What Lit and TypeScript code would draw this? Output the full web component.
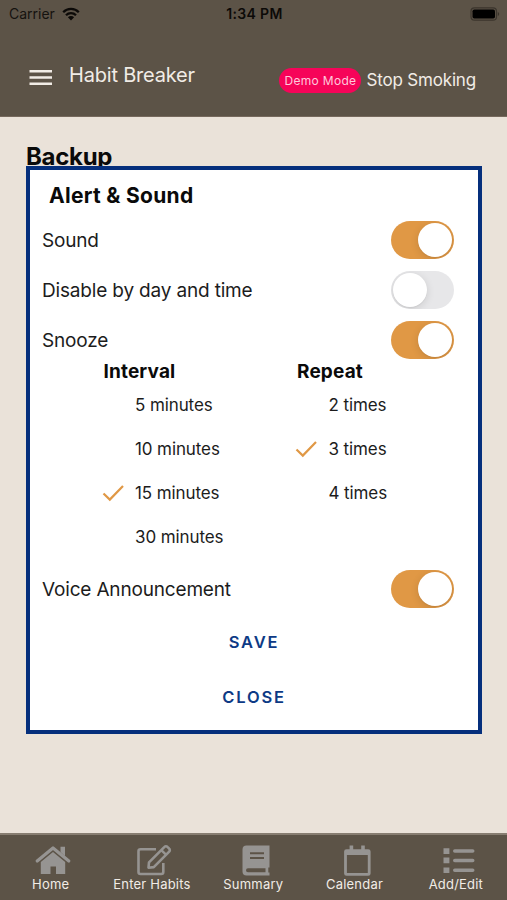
import { LitElement, html, css, svg } from "lit";
import { customElement, property } from "lit/decorators.js";
import { classMap } from "lit/directives/class-map.js";

@customElement("toggle-switch")
class ToggleSwitch extends LitElement {
  @property({ type: Boolean }) on = false;

  static styles = css`
    :host {
      display: block;
    }
    .track {
      box-sizing: border-box;
      width: 63px;
      height: 38px;
      padding: 2px;
      border-radius: 19px;
      background: #e7e7e9;
      display: flex;
      overflow: hidden;
    }
    .track.on {
      background: #e09845;
      justify-content: flex-end;
    }
    .knob {
      width: 34px;
      height: 34px;
      border-radius: 50%;
      background: #fff;
      box-shadow: 0 2px 8px rgba(0, 0, 0, 0.12), 0 1px 1px rgba(0, 0, 0, 0.05);
    }
  `;

  render() {
    return html`<div class=${classMap({ track: true, on: this.on })}><div class="knob"></div></div>`;
  }
}

@customElement("option-list")
class OptionList extends LitElement {
  @property() heading = "";
  @property({ attribute: false }) options: string[] = [];
  @property() selected = "";

  static styles = css`
    :host {
      display: block;
    }
    .heading {
      font-size: 19px;
      font-weight: 700;
      line-height: 22px;
      letter-spacing: 0.15px;
    }
    .option {
      display: grid;
      grid-template-columns: 31.500px auto;
      align-items: center;
      height: 44px;
      font-size: 17px;
      letter-spacing: -0.1px;
      color: #1c1c1c;
      white-space: nowrap;
    }
    .mark {
      display: block;
      width: 22px;
      height: 18px;
      margin-left: -2px;
      fill: none;
      stroke: #e09845;
      stroke-width: 2.200;
    }
  `;

  render() {
    return html`
      <div class="heading">${this.heading}</div>
      ${this.options.map(
        (o) => html`<div class="option">
          <span>${o === this.selected
            ? html`<svg class="mark" viewBox="0 0 22 18"><path d="M1.5 9.5 7.8 15.6 21 2" /></svg>`
            : ""}</span>
          <span>${o}</span>
        </div>`
      )}
    `;
  }
}

const tabIcons = {
  home: svg`<path d="M5.200 18 21 4.900 36.800 18" fill="none" stroke="currentColor" stroke-width="3.200" stroke-linecap="round" stroke-linejoin="round"/>
    <path d="M28.500 3.700h4.500v9.500L28.500 9z"/>
    <path d="M8.800 19 21 9 33.200 19V31H24V23.500H18.500V31H8.800z"/>`,
  edit: svg`<path d="M23 6.300H7.500a2 2 0 0 0-2 2V29a2 2 0 0 0 2 2H28.300a2 2 0 0 0 2-2V20" fill="none" stroke="currentColor" stroke-width="2.600"/>
    <path d="M16 19.300 31.500 3.900a2 2 0 0 1 2.900 0L36.200 5.700a2 2 0 0 1 0 2.900L20.800 24.100 15.500 24.700z" fill="none" stroke="currentColor" stroke-width="2.600" stroke-linejoin="round"/>
    <path d="M28 6.800 33.500 12.200" stroke="currentColor" stroke-width="2.400"/>`,
  book: svg`<path fill-rule="evenodd" d="M12.500 2.500H35.500V24.500H34.300V29.600H35.500V32.500H12.500A4 4 0 0 1 8.500 28.500V6.500A4 4 0 0 1 12.500 2.500zM16 9.300V11.300H30V9.300zM16 14V16H30V14zM14 25.300a2 2 0 0 0 0 4H31.500V25.300z"/>`,
  calendar: svg`<path d="M10.500 6.200H32.200a2.400 2.400 0 0 1 2.400 2.400V30.400A2.400 2.400 0 0 1 32.200 32.800H10.500a2.400 2.400 0 0 1-2.400-2.400V8.600A2.400 2.400 0 0 1 10.500 6.200zM10.900 12V30H31.800V12z" fill-rule="evenodd"/>
    <path d="M13.600 2.400h3.600v5h-3.600zM25.200 2.400h3.600v5h-3.600z"/>`,
  list: svg`<path d="M6.500 5.200h5.900v5.700H6.500zM6.500 14.600h5.900v5.700H6.500zM6.500 24.400h5.900v5.700H6.500z"/>
    <path d="M17.800 8H35.700M17.800 17.500H35.700M17.800 27.200H35.700" stroke="currentColor" stroke-width="3.600" stroke-linecap="round"/>`,
};

@customElement("app-root")
class AppRoot extends LitElement {
  static styles = css`
    :host {
      display: flex;
      flex-direction: column;
      position: relative;
      width: 507px;
      height: 900px;
      overflow: hidden;
      background: #eae2d9;
      color: #0a0a0a;
      font-family: Inter, "Liberation Sans", sans-serif;
    }
    .top {
      height: 117px;
      box-sizing: border-box;
      background: #5c5347;
      border-bottom: 1px solid #76695d;
      flex: none;
    }
    .status {
      height: 27px;
      display: grid;
      grid-template-columns: 1fr auto 1fr;
      align-items: center;
      padding: 0 7px 0 9px;
      font-size: 14px;
      color: #0c0a08;
    }
    .carrier {
      display: flex;
      align-items: center;
      gap: 7px;
      color: #15120f;
    }
    .wifi {
      width: 18px;
      height: 14px;
    }
    .time {
      font-weight: 600;
      letter-spacing: 0.35px;
    }
    .battery {
      width: 30px;
      height: 14px;
      justify-self: end;
    }
    .bar {
      display: flex;
      align-items: center;
      padding: 0 31px 0 29px;
      height: 96px;
      margin-top: 2px;
      color: #f1ece6;
    }
    .menu {
      width: 23px;
      height: 17px;
    }
    .name {
      margin: 0 auto 4px 17px;
      font-size: 20px;
      letter-spacing: -0.2px;
    }
    .badge {
      width: 82px;
      height: 25px;
      margin: 6px 5px 0 0;
      border-radius: 13px;
      background: #f60459;
      color: #ffc9dc;
      font-size: 12px;
      letter-spacing: 0.3px;
      line-height: 25px;
      text-align: center;
    }
    .habit {
      margin-top: 6px;
      font-size: 17px;
      letter-spacing: -0.17px;
    }
    .page {
      flex: 1;
      padding: 26px 26px 0;
    }
    .section {
      margin: 0;
      font-size: 24px;
      font-weight: 700;
      line-height: 28px;
      letter-spacing: -0.3px;
    }
    .dialog {
      position: absolute;
      left: 26px;
      top: 166px;
      width: 456px;
      height: 568px;
      box-sizing: border-box;
      border: 4px solid #052f7c;
      background: #fff;
      padding: 11px 24px 0 12px;
    }
    .title {
      margin: 0 0 4px 7px;
      font-size: 21px;
      line-height: 30px;
      font-weight: 700;
      letter-spacing: 0.3px;
    }
    .row {
      display: flex;
      align-items: center;
      justify-content: space-between;
      height: 50px;
      font-size: 19px;
      letter-spacing: -0.17px;
      color: #1c1c1c;
    }
    .lists {
      display: grid;
      grid-template-columns: 193.500px auto;
      justify-content: start;
      margin: -4px 0 5px 61.500px;
    }
    .actions {
      display: flex;
      flex-direction: column;
      align-items: center;
      margin: 0 -12px 0 0;
    }
    .action {
      height: 55px;
      padding: 0;
      border: 0;
      background: none;
      font: 600 16.500px Inter, sans-serif;
      letter-spacing: 1.8px;
      color: #0d3a85;
    }
    .tabs {
      height: 67px;
      box-sizing: border-box;
      display: grid;
      grid-template-columns: repeat(5, 101.300px);
      background: #5c5347;
      border-top: 2px solid #877d71;
    }
    .tab {
      display: flex;
      flex-direction: column;
      align-items: center;
      padding-top: 8px;
      color: #969492;
    }
    .glyph {
      width: 40px;
      height: 34px;
      margin-left: 2px;
      fill: currentColor;
    }
    .label {
      margin-top: -1px;
      font-size: 13px;
      line-height: 16px;
      letter-spacing: 0.2px;
      color: #f1ece6;
      white-space: nowrap;
    }
  `;

  private tab(icon: unknown, label: string) {
    return html`<div class="tab"><svg class="glyph" viewBox="0 0 40 34">${icon}</svg><span class="label">${label}</span></div>`;
  }

  private row(label: string, on: boolean) {
    return html`<div class="row"><span>${label}</span><toggle-switch ?on=${on}></toggle-switch></div>`;
  }

  render() {
    return html`
      <header class="top">
        <div class="status">
          <span class="carrier">Carrier
            <svg class="wifi" viewBox="0 0 18 14">
              <path d="M1.200 5.200a11 11 0 0 1 15.600 0M4 8.300a7 7 0 0 1 10 0" fill="none" stroke="#0c0a08" stroke-width="2.300"/>
              <path d="M9 13.500 5.900 10.300a4.400 4.400 0 0 1 6.200 0z" fill="#0c0a08"/>
            </svg>
          </span>
          <span class="time">1:34 PM</span>
          <svg class="battery" viewBox="0 0 30 14">
            <rect x="1" y="0.800" width="25.500" height="12.400" rx="3.500" fill="none" stroke="#3b352d" stroke-width="1.200"/>
            <rect x="2.500" y="2.500" width="22.500" height="9" rx="1.800" fill="#000"/>
            <path d="M27.800 5v4q1.400-.7 1.400-2t-1.400-2" fill="#3b352d"/>
          </svg>
        </div>
        <div class="bar">
          <svg class="menu" viewBox="0 0 23 17"><path d="M.5 2.200H23M.5 8.500H23M.5 14.800H23" stroke="#f1ece6" stroke-width="2.600"/></svg>
          <span class="name">Habit Breaker</span>
          <span class="badge">Demo Mode</span>
          <span class="habit">Stop Smoking</span>
        </div>
      </header>
      <main class="page"><h2 class="section">Backup</h2></main>
      <section class="dialog">
        <h3 class="title">Alert &amp; Sound</h3>
        ${this.row("Sound", true)} ${this.row("Disable by day and time", false)} ${this.row("Snooze", true)}
        <div class="lists">
          <option-list heading="Interval" selected="15 minutes"
            .options=${["5 minutes", "10 minutes", "15 minutes", "30 minutes"]}></option-list>
          <option-list heading="Repeat" selected="3 times" .options=${["2 times", "3 times", "4 times"]}></option-list>
        </div>
        ${this.row("Voice Announcement", true)}
        <div class="actions">
          <button class="action">SAVE</button>
          <button class="action">CLOSE</button>
        </div>
      </section>
      <nav class="tabs">
        ${this.tab(tabIcons.home, "Home")} ${this.tab(tabIcons.edit, "Enter Habits")}
        ${this.tab(tabIcons.book, "Summary")} ${this.tab(tabIcons.calendar, "Calendar")}
        ${this.tab(tabIcons.list, "Add/Edit")}
      </nav>
    `;
  }
}
